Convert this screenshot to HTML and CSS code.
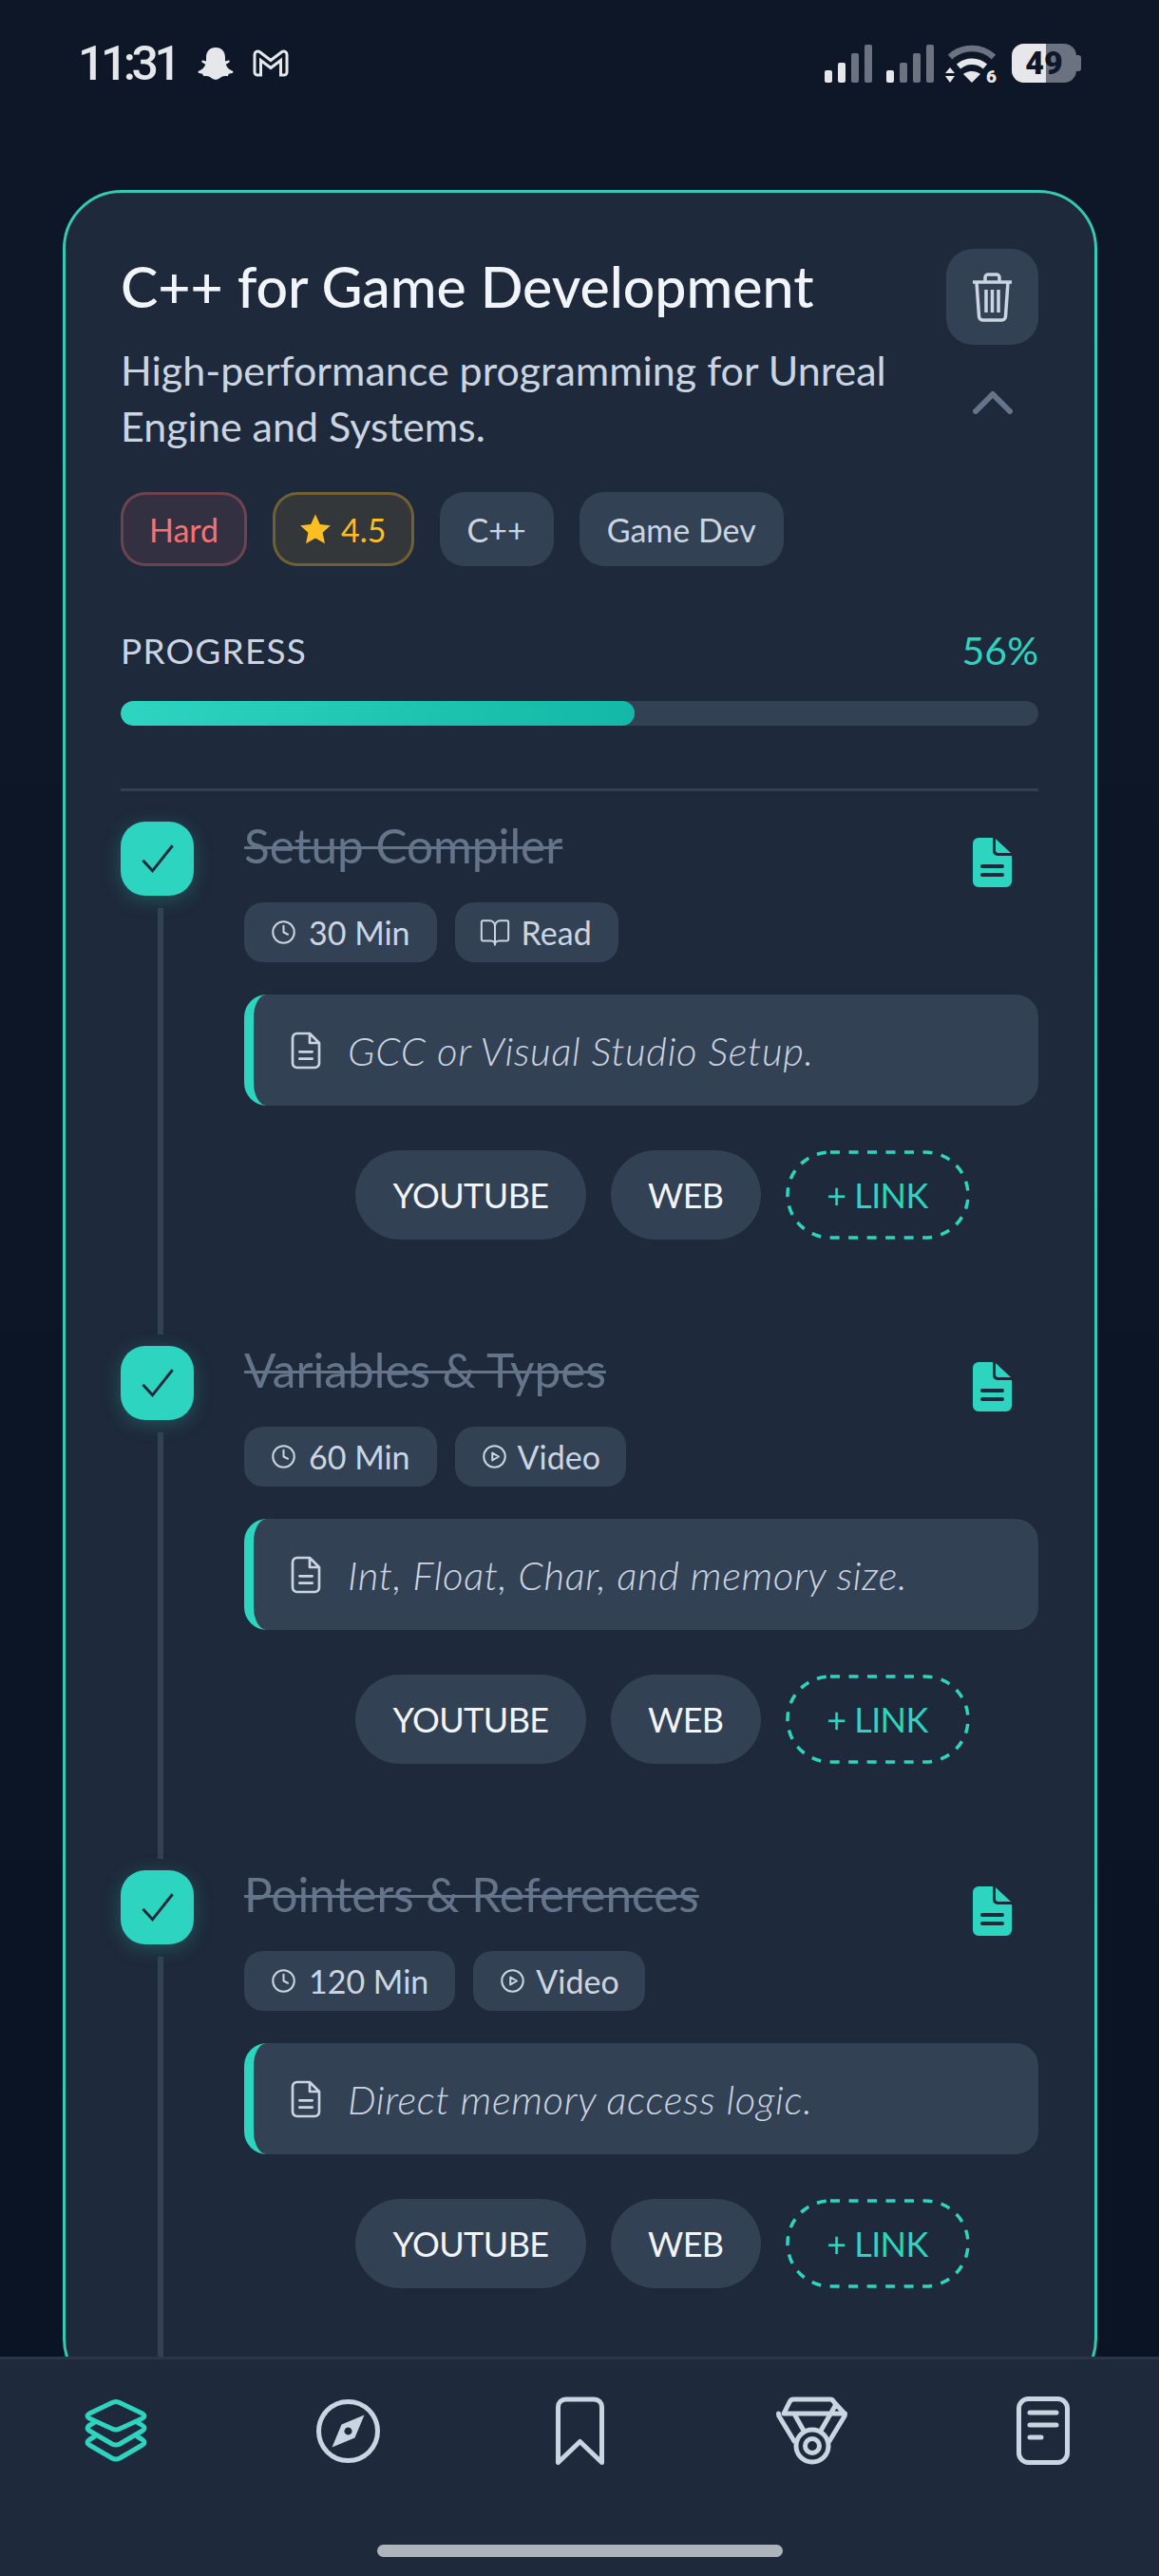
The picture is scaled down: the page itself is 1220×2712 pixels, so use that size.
FILE: index.html
```html
<!DOCTYPE html>
<html lang="en">
<head>
  <meta charset="UTF-8">
  <title>C++ for Game Development</title>
  <link rel="stylesheet" href="styles.css">
</head>
<body>

  <svg class="sprites" width="0" height="0">
    <symbol id="i-clock" viewBox="0 0 24 24"><circle cx="12" cy="12" r="10"/><path d="M12 6v6l4 2"/></symbol>
    <symbol id="i-book" viewBox="0 0 24 24"><path d="M12 7v14M3 18a1 1 0 0 1-1-1V4a1 1 0 0 1 1-1h5a4 4 0 0 1 4 4 4 4 0 0 1 4-4h5a1 1 0 0 1 1 1v13a1 1 0 0 1-1 1h-6a3 3 0 0 0-3 3 3 3 0 0 0-3-3z"/></symbol>
    <symbol id="i-play" viewBox="0 0 24 24"><circle cx="12" cy="12" r="10"/><path d="M10 8.500l6 3.500-6 3.500z"/></symbol>
    <symbol id="i-file" viewBox="0 0 24 30"><path d="M15 1.500H5a3.500 3.500 0 0 0-3.500 3.500v20A3.500 3.500 0 0 0 5 28.500h14a3.500 3.500 0 0 0 3.500-3.500V9zM15 1.500V9h7.500M7 16h10M7 21.500h10"/></symbol>
    <symbol id="i-note" viewBox="0 0 41 52"><path d="M6 0h15v14a5 5 0 0 0 5 5h15v27a6 6 0 0 1-6 6H6a6 6 0 0 1-6-6V6a6 6 0 0 1 6-6z"/><path d="M24 1l16 15H27a3 3 0 0 1-3-3z"/><path class="note-line" d="M10 30h21M10 39h21"/></symbol>
    <symbol id="i-check" viewBox="0 0 24 24"><path d="M3.500 13l5.500 6L20.500 4.500"/></symbol>
    <symbol id="i-dash" viewBox="0 0 194 94"><rect x="2" y="2" width="190" height="90" rx="45"/></symbol>
  </svg>

  <div class="screen">

    <div class="status-bar">
      <div class="status-left">
        <span class="time">11:31</span>
        <svg class="ghost" viewBox="0 0 38 34"><path d="M19 0c6.500 0 10 4.600 10 10.500v4l3.500-1c1.400 0 1.700 1.500.6 2.300l-3.300 2c.8 3.200 3.500 5.800 7 7 1.200.5.900 1.700-.4 2.100l-3.600.9-1 2.400c-2.500-.4-4.600-.4-6.300.6-2 1.200-3.700 3.200-6.500 3.200s-4.500-2-6.500-3.200c-1.700-1-3.800-1-6.300-.6l-1-2.400-3.600-.9c-1.300-.4-1.600-1.600-.4-2.100 3.500-1.200 6.200-3.800 7-7l-3.300-2c-1.100-.8-.8-2.300.6-2.300l3.500 1v-4C9 4.600 12.500 0 19 0z"/></svg>
        <svg class="gmail" viewBox="0 0 38 29"><path d="M2 5.500C2 2.500 5 1 7.500 2.800L19 11.500l11.500-8.700C33 1 36 2.500 36 5.500V24a3 3 0 0 1-3 3h-3.500V11.500L19 19.500 8.500 11.500V27H5a3 3 0 0 1-3-3z"/></svg>
      </div>
      <div class="status-right">
        <svg class="signal" viewBox="0 0 50 40"><rect y="27" width="8" height="13" rx="2"/><rect x="14" y="19" width="8" height="21" rx="2"/><rect class="dim" x="28" y="9" width="8" height="31" rx="2"/><rect class="dim" x="42" width="8" height="40" rx="2"/></svg>
        <svg class="signal" viewBox="0 0 50 40"><rect y="27" width="8" height="13" rx="2"/><rect class="dim" x="14" y="19" width="8" height="21" rx="2"/><rect class="dim" x="28" y="9" width="8" height="31" rx="2"/><rect class="dim" x="42" width="8" height="40" rx="2"/></svg>
        <svg class="wifi" viewBox="0 0 56 50">
          <path class="dim-line" d="M5 13C18 1 38 1 51 13"/>
          <path class="lit-line" d="M14 23c8-7 20-7 28 0"/>
          <path d="M19 31c5-4 13-4 18 0l-9 9z"/>
          <path d="M5 24l5 6H0zM5 40l-5-7h10z"/>
          <text x="43" y="39.500">6</text>
        </svg>
        <div class="battery"><span class="battery-fill"></span><span class="battery-num">49</span><span class="battery-tip"></span></div>
      </div>
    </div>

    <main class="page">
      <section class="card">

        <div class="card-head">
          <div class="card-text">
            <h1>C++ for Game Development</h1>
            <p>High-performance programming for Unreal Engine and Systems.</p>
          </div>
          <div class="card-actions">
            <button class="trash-btn">
              <svg viewBox="0 0 45 52"><path d="M2 10h41M15 10V5a3 3 0 0 1 3-3h9a3 3 0 0 1 3 3v5M6 10l2.500 36a4 4 0 0 0 4 4h20a4 4 0 0 0 4-4L39 10M16 18v24M22.500 18v24M29 18v24"/></svg>
            </button>
            <svg class="chevron" viewBox="0 0 42 25"><path d="M3 22L21 4l18 18"/></svg>
          </div>
        </div>

        <div class="tags">
          <span class="tag tag-hard">Hard</span>
          <span class="tag tag-rate"><svg viewBox="0 0 24 24"><path d="M12 1l3.400 7.400 7.800.9-5.800 5.400 1.600 8L12 18.700 4.999 22.700l1.600-8L.8 9.300l7.800-.9z"/></svg>4.5</span>
          <span class="tag">C++</span>
          <span class="tag">Game Dev</span>
        </div>

        <div class="progress-row">
          <span class="progress-label">PROGRESS</span>
          <span class="progress-pct">56%</span>
        </div>
        <div class="progress-track"><div class="progress-fill" style="width: 56%"></div></div>

        <div class="steps">

          <div class="step">
            <div class="step-rail">
              <div class="check"><svg><use href="#i-check"/></svg></div>
              <div class="rail-line"></div>
            </div>
            <div class="step-body">
              <div class="step-top">
                <h3>Setup Compiler</h3>
                <svg class="note-icon"><use href="#i-note"/></svg>
              </div>
              <div class="meta">
                <span class="meta-chip"><svg><use href="#i-clock"/></svg>30 Min</span>
                <span class="meta-chip meta-read"><svg><use href="#i-book"/></svg>Read</span>
              </div>
              <div class="note"><svg><use href="#i-file"/></svg><em>GCC or Visual Studio Setup.</em></div>
              <div class="links">
                <span class="link-btn">YOUTUBE</span>
                <span class="link-btn">WEB</span>
                <span class="link-btn link-add"><svg class="dash"><use href="#i-dash"/></svg>+ LINK</span>
              </div>
            </div>
          </div>

          <div class="step">
            <div class="step-rail">
              <div class="check"><svg><use href="#i-check"/></svg></div>
              <div class="rail-line"></div>
            </div>
            <div class="step-body">
              <div class="step-top">
                <h3>Variables &amp; Types</h3>
                <svg class="note-icon"><use href="#i-note"/></svg>
              </div>
              <div class="meta">
                <span class="meta-chip"><svg><use href="#i-clock"/></svg>60 Min</span>
                <span class="meta-chip"><svg><use href="#i-play"/></svg>Video</span>
              </div>
              <div class="note"><svg><use href="#i-file"/></svg><em>Int, Float, Char, and memory size.</em></div>
              <div class="links">
                <span class="link-btn">YOUTUBE</span>
                <span class="link-btn">WEB</span>
                <span class="link-btn link-add"><svg class="dash"><use href="#i-dash"/></svg>+ LINK</span>
              </div>
            </div>
          </div>

          <div class="step">
            <div class="step-rail">
              <div class="check"><svg><use href="#i-check"/></svg></div>
              <div class="rail-line"></div>
            </div>
            <div class="step-body">
              <div class="step-top">
                <h3>Pointers &amp; References</h3>
                <svg class="note-icon"><use href="#i-note"/></svg>
              </div>
              <div class="meta">
                <span class="meta-chip"><svg><use href="#i-clock"/></svg>120 Min</span>
                <span class="meta-chip"><svg><use href="#i-play"/></svg>Video</span>
              </div>
              <div class="note"><svg><use href="#i-file"/></svg><em>Direct memory access logic.</em></div>
              <div class="links">
                <span class="link-btn">YOUTUBE</span>
                <span class="link-btn">WEB</span>
                <span class="link-btn link-add"><svg class="dash"><use href="#i-dash"/></svg>+ LINK</span>
              </div>
            </div>
          </div>

        </div>
      </section>
    </main>

    <nav class="bottom-nav">
      <div class="nav-icons">
        <svg class="nav-active" width="66" height="66" viewBox="0 0 66 66"><path d="M29 3.500Q33 1.500 37 3.500L61 15Q65 17.500 61 20L37 31Q33 33 29 31L5 20Q1 17.500 5 15Z"/><path d="M10 24.500L5 27.500Q1 30 5 33L29 47Q33 49 37 47L61 33Q65 30 61 27.500L56 24.500"/><path d="M10 39.500L5 42.500Q1 45.500 5 48L29 62Q33 64 37 62L61 48Q65 45.500 61 42.500L56 39.500"/></svg>
        <svg width="67" height="67" viewBox="0 0 67 67"><circle cx="33.500" cy="33.500" r="31"/><path class="solid" fill-rule="evenodd" d="M50.500 16.500L40.500 40.500L16.500 50.500L26.500 26.500ZM33.500 29.500a4 4 0 1 0 .01 0Z"/></svg>
        <svg width="51" height="72" viewBox="0 0 51 72"><path d="M2.500 69.500V11a8 8 0 0 1 8-8h30a8 8 0 0 1 8 8v58.500L25.500 47.500Z"/></svg>
        <svg width="75" height="72" viewBox="0 0 75 72"><path d="M8 18L14 6q1.500-3 4-3h39q2.500 0 4 3l11 12zM2.500 18q0 2 1 3.500L19 47M72.500 18q0 2-1 3.500L56 47M20 20l9 16M62 10L47 36"/><circle cx="38" cy="52" r="17"/><circle cx="38" cy="52" r="7.500"/></svg>
        <svg width="56" height="72" viewBox="0 0 56 72"><rect x="2.500" y="2.500" width="51" height="67" rx="10"/><path d="M14 17h28M14 30h28M14 43h12"/></svg>
      </div>
      <div class="home-bar"></div>
    </nav>

  </div>

</body>
</html>
```

FILE: styles.css
```css
* {
  box-sizing: border-box;
}
body {
  margin: 0;
  background-color: #0d1727;
  font-family: "Lato", "Noto Sans", sans-serif;
  color: #cbd5e1;
}
.sprites {
  position: absolute;
}
.screen {
  height: 2712px;
  display: flex;
  flex-direction: column;
  overflow: hidden;
}

/* status bar */
.status-bar {
  height: 200px;
  flex: none;
  padding: 46px 87px 0 82px;
  display: flex;
  justify-content: space-between;
  align-items: flex-start;
}
.status-left {
  display: flex;
  align-items: center;
  height: 41px;
}
.time {
  width: 102px;
  font-family: "Roboto", sans-serif;
  font-size: 50px;
  font-weight: 500;
  letter-spacing: -4.5px;
  color: #e5e7eb;
  margin-right: 24px;
}
.ghost {
  width: 38px;
  height: 34px;
  fill: #e5e7eb;
  margin-right: 20px;
}
.gmail {
  width: 38px;
  height: 29px;
  fill: none;
  stroke: #e5e7eb;
  stroke-width: 3;
}
.status-right {
  display: flex;
  align-items: flex-start;
}
.signal {
  width: 50px;
  height: 40px;
  margin-top: 1px;
  fill: #e5e7eb;
  margin-right: 15px;
}
.signal .dim {
  fill: #6b7280;
}
.signal + .wifi {
  margin-left: -3px;
}
.wifi {
  width: 56px;
  height: 50px;
  margin-top: 1px;
  margin-right: 14px;
  fill: #e5e7eb;
}
.wifi path {
  fill: #e5e7eb;
}
.wifi .dim-line,
.wifi .lit-line {
  fill: none;
  stroke-width: 6.500;
}
.wifi .dim-line {
  stroke: #6b7280;
}
.wifi .lit-line {
  stroke: #e5e7eb;
}
.wifi text {
  font-family: "Roboto", sans-serif;
  font-size: 19px;
  font-weight: 900;
}
.battery {
  position: relative;
  width: 68px;
  height: 41px;
  border-radius: 13px;
  background-color: #6b7280;
  text-align: center;
}
.battery-fill {
  position: absolute;
  left: 0;
  top: 0;
  bottom: 0;
  width: 36px;
  background-color: #e5e7eb;
  border-radius: 13px 0 0 13px;
}
.battery-num {
  position: relative;
  font-family: "Roboto", sans-serif;
  font-size: 34px;
  font-weight: 900;
  line-height: 41px;
  color: #0d1727;
}
.battery-tip {
  position: absolute;
  right: -5px;
  top: 12px;
  width: 5px;
  height: 17px;
  background-color: #6b7280;
  border-radius: 0 3px 3px 0;
}

/* card */
.page {
  flex: 1;
  min-height: 0;
  overflow: hidden;
  padding: 0 65px 0 66px;
  background: linear-gradient(#0d1727, #0a1424);
}
.card {
  background-color: #1e293b;
  border: 3px solid #35c8b4;
  border-radius: 62px;
  padding: 59px 59px 0 58px;
}
.card-head {
  display: flex;
  justify-content: space-between;
}
.card-text {
  width: 840px;
}
.card-text h1 {
  margin: 0 0 18px;
  font-size: 59px;
  line-height: 80px;
  font-weight: 500;
  color: #f1f5f9;
}
.card-text p {
  margin: 0 0 4px;
  font-size: 43px;
  line-height: 59px;
  font-weight: 400;
  color: #cbd5e1;
}
.card-actions {
  width: 97px;
  display: flex;
  flex-direction: column;
  align-items: center;
}
.trash-btn {
  width: 97px;
  height: 101px;
  padding: 0;
  border: none;
  border-radius: 28px;
  background-color: #334155;
  display: flex;
  align-items: center;
  justify-content: center;
}
.trash-btn svg {
  width: 45px;
  height: 52px;
  fill: none;
  stroke: #cbd5e1;
  stroke-width: 3.500;
}
.chevron {
  width: 42px;
  height: 25px;
  margin-top: 48px;
  fill: none;
  stroke: #64748b;
  stroke-width: 6;
  stroke-linecap: round;
  stroke-linejoin: round;
}

.tags {
  display: flex;
  gap: 27px;
  margin-top: 36px;
}
.tag {
  height: 78px;
  padding: 0 29px;
  display: inline-flex;
  align-items: center;
  border-radius: 26px;
  background-color: #334155;
  font-size: 34px;
  color: #cbd5e1;
}
.tag-hard {
  padding: 0 27px;
  border: 3px solid rgba(248, 113, 113, 0.3);
  background-color: rgba(248, 113, 113, 0.1);
  color: #f87171;
}
.tag-rate {
  border: 3px solid rgba(251, 191, 36, 0.3);
  background-color: rgba(251, 191, 36, 0.1);
  color: #fbbf24;
  gap: 10px;
  padding: 0 26px 0 25px;
}
.tag-rate svg {
  width: 34px;
  height: 34px;
  fill: #fbbf24;
}

.progress-row {
  display: flex;
  justify-content: space-between;
  margin-top: 64px;
  line-height: 50px;
}
.progress-label {
  font-size: 37px;
  letter-spacing: 1.2px;
}
.progress-pct {
  font-size: 41px;
  color: #2dd4bf;
}
.progress-track {
  height: 26px;
  margin-top: 28px;
  border-radius: 13px;
  background-color: #334155;
  overflow: hidden;
}
.progress-fill {
  height: 100%;
  border-radius: 13px;
  background: linear-gradient(90deg, #2dd4bf, #14b8a6);
}

/* steps */
.steps {
  margin-top: 66px;
  border-top: 3px solid #334155;
  padding-top: 32px;
}
.step {
  display: flex;
  gap: 53px;
  height: 552px;
}
.step-rail {
  width: 77px;
  flex: none;
  display: flex;
  flex-direction: column;
}
.check {
  width: 77px;
  height: 78px;
  border-radius: 26px;
  background-color: #2dd4bf;
  box-shadow: 0 4px 20px rgba(45, 212, 191, 0.25);
  display: flex;
  align-items: center;
  justify-content: center;
}
.check svg {
  width: 44px;
  height: 44px;
  fill: none;
  stroke: #1e293b;
  stroke-width: 1.600;
}
.rail-line {
  flex: 1;
  width: 6px;
  margin: 13px 0 12px 39px;
  background-color: #334155;
}
.step-body {
  flex: 1;
  min-width: 0;
}
.step-top {
  height: 85px;
  display: flex;
  justify-content: space-between;
  padding-right: 28px;
}
.step-top h3 {
  margin: -3px 0 0;
  font-size: 49.500px;
  line-height: 56px;
  font-weight: 400;
  color: #64748b;
  text-decoration: line-through;
  text-decoration-thickness: 3px;
}
.note-icon {
  width: 41px;
  height: 52px;
  margin-top: 17px;
  fill: #2dd4bf;
}
.note-line {
  fill: none;
  stroke: #1e293b;
  stroke-width: 4;
  stroke-linecap: round;
}
.meta {
  display: flex;
  gap: 19px;
}
.meta-chip {
  height: 63px;
  padding: 0 28px;
  display: inline-flex;
  align-items: center;
  gap: 13px;
  border-radius: 20px;
  background-color: #334155;
  font-size: 34px;
  color: #cbd5e1;
}
.meta-chip + .meta-chip {
  padding-right: 27px;
  gap: 11px;
}
.meta-chip svg {
  width: 27px;
  height: 27px;
  fill: none;
  stroke: #cbd5e1;
  stroke-width: 1.800;
  stroke-linecap: round;
  stroke-linejoin: round;
}
.meta-chip.meta-read {
  padding: 0 28px 0 25px;
}
.meta-read svg {
  width: 34px;
  height: 34px;
  stroke-width: 1.400;
}
.note {
  height: 117px;
  margin-top: 34px;
  padding-left: 39px;
  display: flex;
  align-items: center;
  gap: 28px;
  border-left: 10px solid #2dd4bf;
  border-radius: 24px;
  background-color: #334155;
}
.note svg {
  width: 32px;
  height: 40px;
  fill: none;
  stroke: #cbd5e1;
  stroke-width: 2;
  stroke-linejoin: round;
  stroke-linecap: round;
}
.note em {
  font-size: 42px;
  font-weight: 300;
  letter-spacing: 0.6px;
  color: #cbd5e1;
}
.links {
  display: flex;
  gap: 25.500px;
  margin-top: 47px;
  padding-left: 117px;
}
.link-btn {
  height: 94px;
  padding: 0 39.500px;
  display: inline-flex;
  align-items: center;
  border-radius: 47px;
  background-color: #334155;
  font-size: 36px;
  letter-spacing: -0.6px;
  color: #f1f5f9;
}
.link-add {
  position: relative;
  width: 194px;
  padding: 0;
  justify-content: center;
  background-color: transparent;
  color: #2dd4bf;
}
.dash {
  position: absolute;
  left: 0;
  top: 0;
  width: 194px;
  height: 94px;
  fill: none;
  stroke: #2dd4bf;
  stroke-width: 3.500;
  stroke-dasharray: 10 9.500;
}

/* bottom nav */
.bottom-nav {
  height: 231px;
  flex: none;
  border-top: 3px solid #293648;
  background-color: #1e293b;
}
.nav-icons {
  display: grid;
  grid-template-columns: repeat(5, 1fr);
  justify-items: center;
  align-items: center;
  height: 72px;
  margin-top: 39px;
}
.nav-icons svg {
  fill: none;
  stroke: #cbd5e1;
  stroke-width: 5;
  stroke-linecap: round;
  stroke-linejoin: round;
}
.nav-icons svg.nav-active {
  stroke: #2dd4bf;
}
.nav-icons .solid {
  fill: #cbd5e1;
  stroke: none;
}
.home-bar {
  width: 427px;
  height: 13px;
  margin: 84px auto 0;
  border-radius: 7px;
  background-color: #aeb4b9;
}
```
